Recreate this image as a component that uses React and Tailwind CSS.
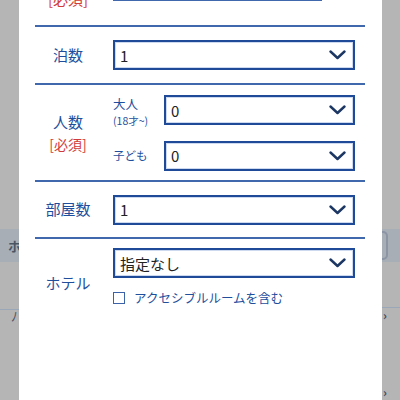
import React from "react";

const font = { fontFamily: '"Noto Sans CJK JP", "Noto Sans", sans-serif' };

function Chevron() {
  return (
    <svg width="17" height="10" viewBox="0 0 17 10" className="shrink-0">
      <path d="M1.5 1.5 L8.5 8 L15.5 1.5" fill="none" stroke="#1c3763" strokeWidth="2.4" strokeLinecap="round" strokeLinejoin="round" />
    </svg>
  );
}

function Select({ value, className = "" }) {
  return (
    <div className={"h-[30px] border-2 border-[#1e4a98] shadow-[inset_0_0_0_1px_#cdd9ee] flex items-center justify-between pl-[5px] pr-[7px] bg-white " + className}>
      <span className="text-[15px] text-[#222] leading-none">{value}</span>
      <Chevron />
    </div>
  );
}

function Sep() {
  return <div className="h-[2px] bg-[#3f68ad] mr-[17px]" />;
}

export default function App() {
  return (
    <div className="w-[400px] h-[400px] overflow-hidden flex bg-[#b5b5b5]" style={font}>
      {/* left dimmed strip */}
      <div className="w-[19px] shrink-0 flex flex-col">
        <div className="h-[229px]" />
        <div className="h-[33px] bg-[#a8aeb6] flex items-center pl-[8px] text-[13px] text-[#4a5564] font-bold overflow-hidden">ホ</div>
        <div className="h-[45px] flex items-start pl-[11px] pt-[47px] text-[13px] text-[#4a5060] leading-none">
          <span>ﾉ</span>
        </div>
        <div className="h-px bg-[#9aa7b8]" />
      </div>

      {/* modal */}
      <div className="w-[363px] shrink-0 bg-white flex flex-col pl-[16px]">
        {/* partially scrolled top row */}
        <div className="flex mt-[-26px] h-[51px]">
          <div className="w-[66px] flex justify-center items-start">
            <span className="text-[15px] text-[#d23b3b] mt-[14px]">[必須]</span>
          </div>
          <div className="ml-[12px] w-[209px] h-[27px] border-b-2 border-[#3f68ad]" />
        </div>
        <Sep />
        {/* 泊数 */}
        <div className="flex items-center h-[56px]">
          <div className="w-[66px] text-center text-[15px] text-[#1f4f9c]">泊数</div>
          <Select value="1" className="ml-[12px] w-[242px]" />
        </div>
        <Sep />
        {/* 人数 */}
        <div className="flex items-center h-[95px]">
          <div className="w-[66px] flex flex-col items-center">
            <span className="text-[15px] text-[#1f4f9c] leading-[20px]">人数</span>
            <span className="text-[14px] text-[#d23b3b] leading-[20px] mt-[2px]">[必須]</span>
          </div>
          <div className="ml-[12px] flex flex-col gap-[14px] mt-[-1px]">
            <div className="flex items-center">
              <div className="w-[51px] flex flex-col text-[#1f4f9c]">
                <span className="text-[12.5px] leading-[16px] mt-[2px]">大人</span>
                <span className="text-[10.5px] leading-[13px] mt-[2px]">(18才~)</span>
              </div>
              <Select value="0" className="w-[191px]" />
            </div>
            <div className="flex items-center">
              <div className="w-[51px] text-[11.5px] text-[#1f4f9c]">子ども</div>
              <Select value="0" className="w-[191px]" />
            </div>
          </div>
        </div>
        <Sep />
        {/* 部屋数 */}
        <div className="flex items-center h-[55px]">
          <div className="w-[66px] text-center text-[15px] text-[#1f4f9c]">部屋数</div>
          <Select value="1" className="ml-[12px] w-[242px]" />
        </div>
        <Sep />
        {/* ホテル */}
        <div className="flex items-start pt-[9px]">
          <div className="w-[66px] text-center text-[15px] text-[#1f4f9c] mt-[24px]">ホテル</div>
          <div className="ml-[12px] flex flex-col">
            <Select value="指定なし" className="w-[242px]" />
            <div className="flex items-center mt-[14px]">
              <div className="w-[12px] h-[12px] border-[1.5px] border-[#3c63a8] bg-white" />
              <span className="ml-[9px] text-[12.5px] text-[#1f4f9c] leading-none">アクセシブルルームを含む</span>
            </div>
          </div>
        </div>
      </div>

      {/* right dimmed strip */}
      <div className="w-[18px] shrink-0 flex flex-col">
        <div className="h-[229px]" />
        <div className="h-[33px] bg-[#a8aeb6] flex items-center">
          <div className="w-[6px] h-[29px] border-2 border-l-0 border-[#8b95a3] rounded-r-[5px]" />
        </div>
        <div className="h-[45px] relative">
          <span className="absolute left-[1px] top-[47px] text-[#3e4a5a] text-[12px] font-bold leading-none">›</span>
        </div>
        <div className="h-px bg-[#9aa7b8]" />
        <div className="h-[85px] relative">
          <span className="absolute left-[1px] top-[78px] text-[#3e4a5a] text-[12px] font-bold leading-none">›</span>
        </div>
      </div>
    </div>
  );
}
